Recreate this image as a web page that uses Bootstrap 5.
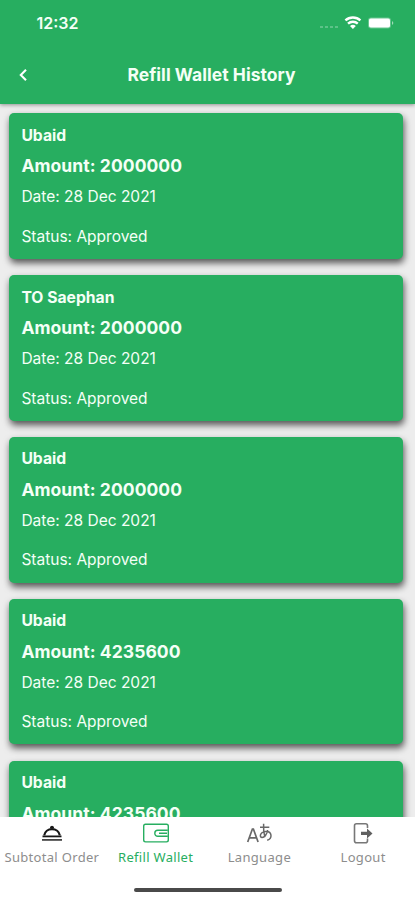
<!DOCTYPE html>
<html lang="en">
<head>
<meta charset="utf-8">
<meta name="viewport" content="width=device-width, initial-scale=1">
<title>Refill Wallet History</title>
<link href="https://cdn.jsdelivr.net/npm/bootstrap@5.3.0/dist/css/bootstrap.min.css" rel="stylesheet">
<style>
:root{--brand:#27ae60}
body{font-family:Inter,"Liberation Sans",sans-serif;background:#ededed;color:#f4fff6}
.screen{height:900px}
.top-area{background:var(--brand);height:104px;box-shadow:0 1px 4px rgba(0,0,0,.4);z-index:2}
.status-row{height:46px;padding:0 20px 0 36.5px}
.clock{font-size:16px;letter-spacing:0;line-height:20px}
.title-row{height:58px}
.page-title{font-size:17.5px;line-height:24px;letter-spacing:.03px}
.history{padding:9.4px 12px 0 9px;gap:16.2px;min-height:0}
.refill{background:var(--brand);border-radius:5px;height:145.6px;padding:12.5px 12.4px;box-shadow:1px 4px 7px rgba(0,0,0,.65)}
.who{font-size:15.7px;line-height:20px;letter-spacing:0}
.amount{font-size:17.5px;line-height:22px;margin-top:9.6px;letter-spacing:.06px}
.detail{font-size:15.5px;line-height:20px;margin-top:9.8px;letter-spacing:0}
.detail + .detail{margin-top:19.6px}
.tabs{height:83px;z-index:2}
.tab-link{color:#8d8d8d;font-family:"Noto Sans",sans-serif;font-size:13px;letter-spacing:.32px;line-height:18px;padding-top:5px;white-space:nowrap}
.tab-link.active{color:var(--brand);letter-spacing:.3px}
.tab-link svg{display:block;margin-bottom:4px}
.home-bar{width:148px;height:4px;background:#4a4a4a;margin-bottom:8px}
</style>
</head>
<body>
<div class="screen d-flex flex-column overflow-hidden">
  <header class="top-area position-relative flex-shrink-0">
    <div class="status-row d-flex align-items-center justify-content-between">
      <span class="clock fw-semibold">12:32</span>
      <svg width="77" height="16" viewBox="0 0 77 16" fill="#fff">
        <g opacity=".25"><rect x="2" y="11" width="3" height="2"/><rect x="7" y="11" width="3" height="2"/><rect x="12" y="11" width="3" height="2"/><rect x="17" y="11" width="3" height="2"/></g>
        <g fill="none" stroke="#fff" stroke-width="2.4"><path d="M27.400 5.400a11.200 11.200 0 0 1 15 0M30 8.700a7.300 7.300 0 0 1 9.800 0"/></g>
        <path d="M32 11a4.600 4.600 0 0 1 5.800 0L34.900 14z"/>
        <rect x="50" y="2.500" width="23" height="11" rx="3" opacity=".3"/><rect x="51" y="3.500" width="21" height="9" rx="1.800"/><path d="M74 6q2.600 2 0 4z" opacity=".55"/>
      </svg>
    </div>
    <div class="title-row d-flex align-items-center">
      <svg class="ms-3" width="16" height="16" viewBox="0 0 16 16" fill="none" stroke="#fff" stroke-width="2.100"><path d="M10 2.800 4.800 8l5.200 5.200"/></svg>
      <h1 class="page-title fw-bold flex-fill text-center m-0 pe-4">Refill Wallet History</h1>
    </div>
  </header>

  <main class="history d-flex flex-column flex-fill overflow-hidden">
    <article class="refill flex-shrink-0"><div class="who fw-bold">Ubaid</div><div class="amount fw-bold">Amount: 2000000</div><div class="detail">Date: 28 Dec 2021</div><div class="detail">Status: Approved</div></article>
    <article class="refill flex-shrink-0"><div class="who fw-bold">TO Saephan</div><div class="amount fw-bold">Amount: 2000000</div><div class="detail">Date: 28 Dec 2021</div><div class="detail">Status: Approved</div></article>
    <article class="refill flex-shrink-0"><div class="who fw-bold">Ubaid</div><div class="amount fw-bold">Amount: 2000000</div><div class="detail">Date: 28 Dec 2021</div><div class="detail">Status: Approved</div></article>
    <article class="refill flex-shrink-0"><div class="who fw-bold">Ubaid</div><div class="amount fw-bold">Amount: 4235600</div><div class="detail">Date: 28 Dec 2021</div><div class="detail">Status: Approved</div></article>
    <article class="refill flex-shrink-0"><div class="who fw-bold">Ubaid</div><div class="amount fw-bold">Amount: 4235600</div></article>
  </main>

  <footer class="tabs bg-white position-relative flex-shrink-0 d-flex flex-column justify-content-between align-items-center">
    <nav class="row g-0 w-100">
      <a class="tab-link col-3 d-flex flex-column align-items-center text-decoration-none" href="#">
        <svg width="28" height="22" viewBox="0 0 28 22"><path d="M6.200 13.400a7.900 7.400 0 0 1 15.600 0" fill="none" stroke="#161616" stroke-width="2.200"/><path d="M4.500 14.400h19" stroke="#161616" stroke-width="1.800"/><path d="M11.800 6.400a2.200 2.600 0 0 1 4.400 0z" fill="#161616"/><path d="M4 17.900h20" stroke="#444" stroke-width="1.800"/></svg>
        <span>Subtotal Order</span></a>
      <a class="tab-link active col-3 d-flex flex-column align-items-center text-decoration-none" href="#">
        <svg width="28" height="22" viewBox="0 0 28 22" fill="none" stroke="#27ae60" stroke-width="1.400"><rect x="1.700" y="2.200" width="24.600" height="17.700" rx="1.800"/><path d="M25.800 8.300H15.800a3 3 0 0 0 0 6h10M17 11.300h8"/></svg>
        <span>Refill Wallet</span></a>
      <a class="tab-link col-3 d-flex flex-column align-items-center text-decoration-none" href="#">
        <svg width="28" height="22" viewBox="0 0 28 22" fill="none" stroke="#686868" stroke-width="1.700"><path d="m2.700 20 4.700-13h1l4.700 13M4.300 15.800h7.200"/><path d="M15 5.200h9.300M18.600 1.800c-.3 6 .1 9.600 1.300 13.400M22.700 8.200c-.8 4.200-3.300 7.400-5.600 7.400-3 0-2.200-5.900 3.700-6.200 6.500-.3 6.800 7.300 1.400 8.800" stroke-width="1.500"/></svg>
        <span>Language</span></a>
      <a class="tab-link col-3 d-flex flex-column align-items-center text-decoration-none" href="#">
        <svg width="28" height="22" viewBox="0 0 28 22"><path d="M18.500 6V3.800q0-2-2-2H7.500q-2 0-2 2v15q0 2 2 2h9q2 0 2-2V16.500" fill="none" stroke="#777" stroke-width="1.600"/><path d="M12 9.800h6V6.400l5.500 5-5.500 5V13h-6z" fill="#606060"/></svg>
        <span>Logout</span></a>
    </nav>
    <div class="home-bar rounded-pill"></div>
  </footer>
</div>
<script src="https://cdn.jsdelivr.net/npm/bootstrap@5.3.0/dist/js/bootstrap.bundle.min.js"></script>
</body>
</html>
